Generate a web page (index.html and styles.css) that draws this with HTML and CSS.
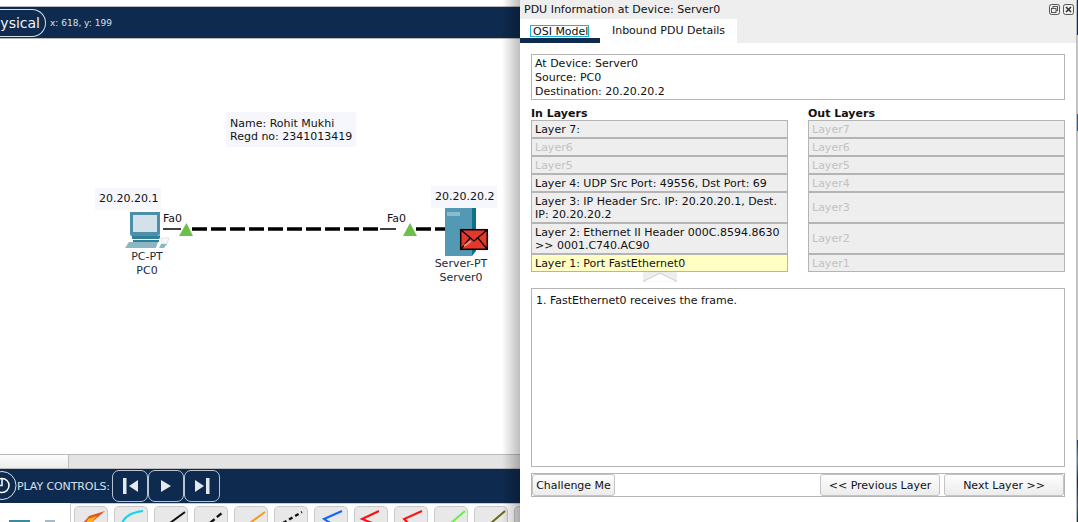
FILE: index.html
```html
<!DOCTYPE html>
<html lang="en">
<head>
    <meta charset="UTF-8">
    <title>PDU Information at Device: Server0</title>
    <link rel="stylesheet" href="styles.css">
</head>
<body>
    <div class="app">
        <div class="workspace">
            <div class="topgap"></div>
            <div class="topbar">
                <span class="physical">ysical</span>
                <span class="coords">x: 618, y: 199</span>
            </div>
            <div class="canvas">
                <div class="note note-name">Name: Rohit Mukhi<br>Regd no: 2341013419</div>
                <div class="note note-ip1">20.20.20.1</div>
                <div class="note note-ip2">20.20.20.2</div>
                <svg class="links" width="520" height="415" viewBox="0 39 520 415">
                    <line x1="163" y1="229" x2="181" y2="229" stroke="#000" stroke-width="1.5"/>
                    <line x1="192" y1="229" x2="380" y2="229" stroke="#000" stroke-width="3.4" stroke-dasharray="15 4"/>
                    <line x1="380" y1="229" x2="396" y2="229" stroke="#000" stroke-width="1.5"/>
                    <line x1="416" y1="229" x2="446" y2="229" stroke="#000" stroke-width="3.4" stroke-dasharray="15 4"/>
                    <polygon points="186.500,223 193,236 179,236" fill="#6cc04a"/>
                    <polygon points="410,223 417,236 403,236" fill="#6cc04a"/>

                    <!-- pc -->
                    <path d="M130 212h30v22l-2 2h-27l-1-2z" fill="#4d8fa8"/>
                    <rect x="133" y="215" width="24" height="17" fill="#d3e2ea"/>
                    <path d="M132 236h27l1-2v4l-1 1h-27z" fill="#2f7f97"/>
                    <path d="M133 240h26v2h-26z" fill="#2f7f97"/>
                    <path d="M129 242h29l-2 6h-31z" fill="#8db6c4"/>
                    <path d="M161 238h8l-2 6h-5z" fill="#f6f9fa" stroke="#c4d6dd" stroke-width=".6"/>
                    <path d="M161 244h6l-3 4h-5z" fill="#8db6c4"/>

                    <!-- server -->
                    <rect x="445" y="208" width="27" height="48" fill="#5399b3"/>
                    <rect x="472" y="208" width="4" height="43" fill="#0f7088"/>
                    <path d="M472 251h4l-4 5z" fill="#0f7088"/>
                    <rect x="447" y="212" width="13" height="4" fill="#8bbccd"/>

                    <!-- envelope -->
                    <rect x="460.700" y="229.700" width="26.600" height="19.600" fill="#e5382c" stroke="#000" stroke-width="1.500"/>
                    <path d="M461 230l13 11 13-11M461 249l9-11M487 249l-9-11" fill="none" stroke="#000" stroke-width="1.200"/>
                    <path d="M464 246l7-5" fill="none" stroke="#ff8a70" stroke-width="2"/>
                </svg>
                <div class="dev-label dev-pc">PC-PT<br>PC0</div>
                <div class="dev-label dev-server">Server-PT<br>Server0</div>
                <div class="port port-a">Fa0</div>
                <div class="port port-b">Fa0</div>
            </div>
            <div class="hscroll">
                <div class="hscroll-thumb"></div>
            </div>
            <div class="playbar">
                <span class="clock">
                    <svg width="17" height="34" viewBox="0 0 17 34">
                        <circle cx="2" cy="16.500" r="14" fill="none" stroke="#d8e0ea" stroke-width="1"/>
                        <circle cx="2" cy="16.500" r="7" fill="none" stroke="#fff" stroke-width="1.500"/>
                        <path d="M2 9v7.500h-3" fill="none" stroke="#fff" stroke-width="1.500"/>
                    </svg>
                </span>
                <span class="play-label">PLAY CONTROLS:</span>
                <div class="play-btn">
                    <svg width="18" height="16" viewBox="0 0 18 16"><rect x="2" y="0" width="3.500" height="16" fill="#e4e9ef"/><polygon points="17,2 17,14 8,8" fill="#e4e9ef"/></svg>
                </div>
                <div class="play-btn">
                    <svg width="18" height="16" viewBox="0 0 18 16"><polygon points="4,2 4,14 14,8" fill="#e4e9ef"/></svg>
                </div>
                <div class="play-btn">
                    <svg width="18" height="16" viewBox="0 0 18 16"><polygon points="2,2 2,14 11,8" fill="#e4e9ef"/><rect x="13" y="0" width="3.500" height="16" fill="#e4e9ef"/></svg>
                </div>
            </div>
            <div class="toolbar">
                <div class="tool-left">
                    <svg width="70" height="19" viewBox="0 0 70 19">
                        <rect x="9" y="17" width="21" height="2" fill="#3c8aa0"/>
                        <rect x="45" y="17" width="10" height="2" fill="#a5bcc6"/>
                    </svg>
                </div>
                <div class="tool-row">
                    <div class="tool"><svg width="32" height="19" viewBox="0 0 32 19"><polygon points="30,4 14,9 8,16 16,16" fill="#e8531f"/><polygon points="22,9 13,12 11,16 16,16" fill="#f6b91d"/></svg></div>
                    <div class="tool"><svg width="32" height="19" viewBox="0 0 32 19"><path d="M7 16c3-7 11-11 21-12" fill="none" stroke="#14d4f0" stroke-width="2"/></svg></div>
                    <div class="tool"><svg width="32" height="19" viewBox="0 0 32 19"><path d="M15 16l15-11" stroke="#111" stroke-width="2"/></svg></div>
                    <div class="tool"><svg width="32" height="19" viewBox="0 0 32 19"><path d="M15 16l13-11" stroke="#111" stroke-width="2.400" stroke-dasharray="6 3"/></svg></div>
                    <div class="tool"><svg width="32" height="19" viewBox="0 0 32 19"><path d="M15 16l15-11" stroke="#f39a1a" stroke-width="2"/></svg></div>
                    <div class="tool"><svg width="32" height="19" viewBox="0 0 32 19"><path d="M8 16l19-11" stroke="#111" stroke-width="2.400" stroke-dasharray="4 3"/></svg></div>
                    <div class="tool"><svg width="32" height="19" viewBox="0 0 32 19"><path d="M27 4l-18 8 8 5" fill="none" stroke="#1166ff" stroke-width="2"/></svg></div>
                    <div class="tool"><svg width="32" height="19" viewBox="0 0 32 19"><path d="M24 4l-17 8 13 5" fill="none" stroke="#ff1010" stroke-width="2"/></svg></div>
                    <div class="tool"><svg width="32" height="19" viewBox="0 0 32 19"><path d="M27 4l-18 8 5 5" fill="none" stroke="#ff1010" stroke-width="2"/></svg></div>
                    <div class="tool"><svg width="32" height="19" viewBox="0 0 32 19"><path d="M16 16l14-12" stroke="#66ee44" stroke-width="2"/></svg></div>
                    <div class="tool"><svg width="32" height="19" viewBox="0 0 32 19"><path d="M16 16l14-12" stroke="#6a6a14" stroke-width="2"/></svg></div>
                    <div class="tool"></div>
                </div>
            </div>
        </div>

        <div class="panel">
            <div class="panel-title">
                <span>PDU Information at Device: Server0</span>
                <span class="win-btns">
                    <svg width="11" height="11" viewBox="0 0 11 11"><rect x=".5" y=".5" width="10" height="10" rx="2" fill="none" stroke="#555"/><rect x="4" y="2.500" width="4.500" height="4" fill="none" stroke="#555"/><rect x="2.500" y="4.500" width="4.500" height="4" fill="#eee" stroke="#555"/></svg>
                    <svg width="11" height="11" viewBox="0 0 11 11"><rect x=".5" y=".5" width="10" height="10" rx="2" fill="none" stroke="#555"/><path d="M3 3l5 5M8 3l-5 5" stroke="#333" stroke-width="1.600"/></svg>
                </span>
            </div>
            <div class="tabs">
                <div class="tab tab-osi"><span class="tab-focus">OSI Model</span></div>
                <div class="tab tab-inbound">Inbound PDU Details</div>
            </div>
            <div class="panel-body">
                <div class="info-box">At Device: Server0<br>Source: PC0<br>Destination: 20.20.20.2</div>
                <div class="columns">
                    <div class="col">
                        <div class="col-head">In Layers</div>
                        <div class="layer">Layer 7:</div>
                        <div class="layer off">Layer6</div>
                        <div class="layer off">Layer5</div>
                        <div class="layer">Layer 4: UDP Src Port: 49556, Dst Port: 69</div>
                        <div class="layer two">Layer 3: IP Header Src. IP: 20.20.20.1, Dest. IP: 20.20.20.2</div>
                        <div class="layer two">Layer 2: Ethernet II Header 000C.8594.8630 &gt;&gt; 0001.C740.AC90</div>
                        <div class="layer current">Layer 1: Port FastEthernet0</div>
                    </div>
                    <div class="col">
                        <div class="col-head">Out Layers</div>
                        <div class="layer off">Layer7</div>
                        <div class="layer off">Layer6</div>
                        <div class="layer off">Layer5</div>
                        <div class="layer off">Layer4</div>
                        <div class="layer off two mid">Layer3</div>
                        <div class="layer off two mid">Layer2</div>
                        <div class="layer off">Layer1</div>
                    </div>
                </div>
                <div class="collapse">
                    <svg width="34" height="10" viewBox="0 0 34 10"><rect width="34" height="10" fill="#eee"/><path d="M0 9.500L17 1l17 8.500" fill="#fff" stroke="#ccc"/></svg>
                </div>
                <div class="desc">1. FastEthernet0 receives the frame.</div>
                <div class="btn-bar">
                    <button class="btn btn-challenge">Challenge Me</button>
                    <button class="btn btn-prev">&lt;&lt; Previous Layer</button>
                    <button class="btn btn-next">Next Layer &gt;&gt;</button>
                </div>
            </div>
        </div>
        <div class="edge"></div>
    </div>
</body>
</html>
```

FILE: styles.css
```css
html, body {
    margin: 0;
    padding: 0;
    overflow: hidden;
}
body {
    font-family: "DejaVu Sans", sans-serif;
    font-size: 11px;
    color: #111;
    background-color: #0e2a4e;
}
.app {
    display: flex;
    width: 1078px;
    height: 522px;
}
.workspace {
    width: 520px;
    height: 522px;
    display: flex;
    flex-direction: column;
    position: relative;
    overflow: hidden;
}
.workspace::after {
    content: "";
    position: absolute;
    top: 0;
    right: 0;
    bottom: 0;
    width: 18px;
    background: linear-gradient(to right, rgba(0, 0, 0, 0), rgba(0, 0, 0, 0.26));
}
.topgap {
    height: 6px;
    background-color: #fff;
    border-bottom: 1px solid #bbb;
}
.topbar {
    height: 31px;
    background-color: #0e2a4e;
    border-bottom: 1px solid #bbb;
    display: flex;
    align-items: center;
    color: #d8e0ea;
}
.physical {
    font-size: 14px;
    color: #f2f5f8;
    border: 1px solid #d8e0ea;
    border-left: none;
    border-radius: 0 14px 14px 0;
    height: 28px;
    line-height: 26px;
    width: 46px;
    margin-right: 4px;
    box-sizing: border-box;
    flex: none;
    display: flex;
    justify-content: flex-end;
    padding-right: 5px;
}
.coords {
    font-size: 9px;
}
.canvas {
    height: 415px;
    background-color: #fff;
    position: relative;
}
.links {
    position: absolute;
    left: 0;
    top: 0;
}
.note {
    position: absolute;
    background-color: #f6f7fd;
    line-height: 13px;
    white-space: nowrap;
}
.note-name {
    left: 226px;
    top: 73px;
    padding: 5px 4px 4px 4px;
}
.note-ip1 {
    left: 95px;
    top: 149px;
    padding: 4px 3px 5px 4px;
}
.note-ip2 {
    left: 431px;
    top: 147px;
    padding: 4px 3px 5px 4px;
}
.dev-label {
    position: absolute;
    text-align: center;
    line-height: 14px;
    white-space: nowrap;
    color: #1c2a3a;
}
.dev-pc {
    left: 117px;
    width: 60px;
    top: 211px;
}
.dev-server {
    left: 421px;
    width: 80px;
    top: 218px;
}
.port {
    position: absolute;
    white-space: nowrap;
    color: #111;
}
.port-a {
    left: 163px;
    top: 173px;
}
.port-b {
    left: 387px;
    top: 173px;
}
.hscroll {
    height: 13px;
    background-color: #e4e4e4;
    border-bottom: 1px solid #bbb;
    border-top: 1px solid #bbb;
}
.hscroll-thumb {
    width: 68px;
    height: 13px;
    background: linear-gradient(to bottom, #fdfdfd, #ececec);
    border-right: 1px solid #bbb;
}
.playbar {
    height: 34px;
    background-color: #0e2a4e;
    display: flex;
    align-items: center;
    color: #d8e0ea;
}
.clock {
    width: 17px;
    height: 34px;
    flex: none;
}
.clock svg {
    display: block;
}
.play-label {
    width: 95px;
    flex: none;
    white-space: nowrap;
    letter-spacing: -0.1px;
}
.play-btn {
    width: 36px;
    height: 32px;
    border: 1px solid #b8c4d2;
    border-radius: 7px;
    box-sizing: border-box;
    display: flex;
    align-items: center;
    justify-content: center;
    flex: none;
}
.toolbar {
    flex: 1;
    background-color: #fff;
    display: flex;
    overflow: hidden;
}
.tool-left {
    width: 70px;
    flex: none;
}
.tool-left svg {
    display: block;
}
.tool-row {
    flex: 1;
    display: flex;
    gap: 6px;
    border-left: 1px solid #ccc;
    border-top: 1px solid #ccc;
    padding: 2px 0 0 3px;
    overflow: hidden;
}
.tool {
    width: 34px;
    height: 30px;
    flex: none;
    border: 1px solid #c8c8c8;
    border-radius: 5px;
    background-color: #e8e8e8;
    box-sizing: border-box;
}
.tool svg {
    display: block;
}

/* pdu window */
.panel {
    width: 556px;
    height: 522px;
    background-color: #fff;
    flex: none;
}
.panel-title {
    height: 19px;
    background-color: #eee;
    display: flex;
    align-items: center;
    justify-content: space-between;
    padding: 0 2px 0 4px;
}
.win-btns {
    display: flex;
    gap: 3px;
    margin-top: -1px;
}
.tabs {
    height: 24px;
    background-color: #eee;
    display: flex;
}
.tab {
    box-sizing: border-box;
    height: 24px;
    padding-top: 5px;
}
.tab-osi {
    width: 80px;
    background-color: #fff;
    border-bottom: 5px solid #0e2a4e;
    padding-left: 10px;
    padding-top: 6px;
}
.tab-focus {
    border: 1px solid #18b4dc;
    padding: 0 1px 0 2px;
    line-height: 11px;
    display: block;
    width: 54px;
    height: 10px;
    white-space: nowrap;
}
.tab-inbound {
    width: 137px;
    background-color: #fff;
    text-align: center;
}
.panel-body {
    padding: 11px 11px 0 11px;
}
.info-box {
    height: 46px;
    border: 1px solid #b4b4b4;
    box-sizing: border-box;
    padding: 2px 3px;
    line-height: 14px;
}
.columns {
    display: flex;
    justify-content: space-between;
    margin-top: 7px;
}
.col {
    width: 257px;
}
.col-head {
    font-weight: bold;
    height: 13px;
    line-height: 13px;
}
.layer {
    box-sizing: border-box;
    height: 18px;
    border: 1px solid #b4b4b4;
    background-color: #eee;
    padding: 2px 3px 0;
    line-height: 14px;
}
.layer.two {
    height: 31px;
    line-height: 13px;
    padding-top: 2px;
}
.layer.off {
    color: #c2c2c2;
}
.layer.two.mid {
    line-height: 29px;
    padding-top: 0;
}
.layer.current {
    background-color: #ffffc4;
}
.collapse {
    height: 16px;
    padding-left: 112px;
}
.collapse svg {
    display: block;
}
.desc {
    height: 179px;
    box-sizing: border-box;
    border: 1px solid #b4b4b4;
    padding: 5px 4px;
    line-height: 13px;
}
.btn-bar {
    margin-top: 6px;
    height: 24px;
    box-sizing: border-box;
    border: 1px solid #b4b4b4;
    display: flex;
    align-items: center;
}
.btn {
    font-family: "DejaVu Sans", sans-serif;
    font-size: 11px;
    color: #111;
    height: 22px;
    padding: 0;
    border: 1px solid #c4c4c4;
    border-radius: 3px;
    background: linear-gradient(to bottom, #fdfdfd, #ececec);
}
.btn-challenge {
    width: 83px;
}
.btn-prev {
    width: 120px;
    margin-left: auto;
}
.btn-next {
    width: 120px;
    margin-left: 4px;
}
.edge {
    width: 2px;
    flex: none;
    box-sizing: border-box;
    border-left: 1px solid #bbb;
    background: linear-gradient(to bottom, #0e2a4e 0, #0e2a4e 35px, #c8c8c8 35px, #c8c8c8 114px, #1a6aa0 114px, #1a6aa0 131px, #c8c8c8 131px, #c8c8c8 440px, #1a3050 440px, #5a8a9a 460px, #0e2a4e 480px, #1a6aa0 505px, #0e2a4e 522px);
}
```
